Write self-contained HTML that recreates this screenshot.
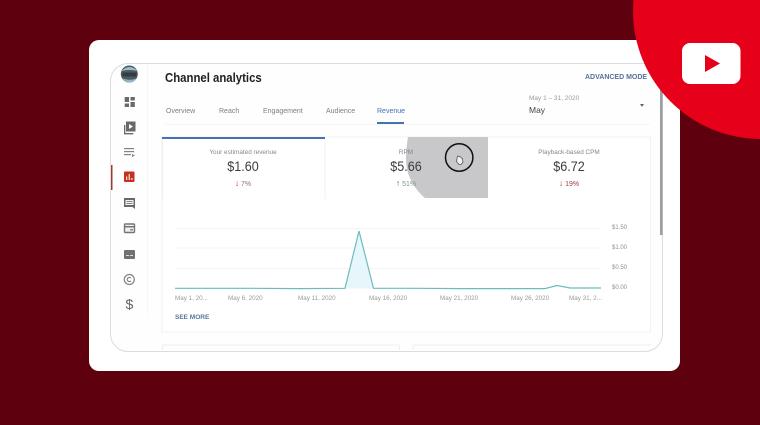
<!DOCTYPE html>
<html><head><meta charset="utf-8">
<style>
html,body{margin:0;padding:0}
body{width:760px;height:425px;overflow:hidden;background:#5e000e;position:relative;font-family:"Liberation Sans",sans-serif}
.a{position:absolute;white-space:nowrap}
.c{transform:translateX(-50%)}
.v{transform:translateX(-50%) scaleX(.9);font-size:14px;color:#3a3d40;top:158px}
.l{font-size:6.4px;color:#85878b;top:148.500px}
.d{font-size:7px;top:178px}
.d span{font-size:8.500px;font-weight:bold}
.t{top:108px;font-size:7px;color:#7b7f84}
.y{left:612px;font-size:6px;color:#909090}
.x{top:294.500px;font-size:6.300px;color:#999}
#m{position:absolute;left:0;top:0;width:760px;height:425px;filter:blur(.3px)}
</style></head><body>
<div class="a" style="left:89px;top:40px;width:591px;height:331px;background:#fff;border-radius:10px"></div>
<div id="m">
<div class="a" style="left:110px;top:63px;width:551px;height:287px;background:#fefefe;border:1px solid #d6dee3;border-radius:18px"></div>
<svg class="a" style="left:0;top:0" width="760" height="425" viewBox="0 0 760 425">
<rect x="147" y="64" width="1" height="250" fill="#f6f6f6"/>
<!-- avatar -->
<circle cx="129.300" cy="74" r="8.500" fill="#4c5a62"/>
<path d="M121.500 71q8-8 16 0q-8-2-16 0z" fill="#9dbbcd"/>
<path d="M122.500 78.500q7 2.500 14 0q-3 4-7 4t-7-4z" fill="#8db7c2"/>
<rect x="122.500" y="72.500" width="14" height="4" fill="#333c42"/>
<!-- dashboard -->
<g fill="#66696d"><rect x="124.700" y="97" width="4.300" height="5"/><rect x="130.500" y="97" width="4.300" height="3.500"/><rect x="124.700" y="103.500" width="4.300" height="3.500"/><rect x="130.500" y="102" width="4.300" height="5"/></g>
<!-- videos -->
<path d="M124 125h1.300v8h8v1.400h-9.300z" fill="#66696d"/><rect x="126" y="121.500" width="9.500" height="10" fill="#66696d"/><path d="M129 124l4 2.500-4 2.500z" fill="#fff"/>
<!-- playlist -->
<g fill="#808285"><rect x="124" y="148" width="10" height="1.200"/><rect x="124" y="151" width="10" height="1.200"/><rect x="124" y="154" width="7" height="1.200"/><path d="M132 154l3 1.500-3 1.500z"/></g>
<!-- active rail -->
<rect x="111" y="165" width="1.500" height="25" fill="#a5382b"/>
<rect x="124" y="171.500" width="10.500" height="10.500" rx="1" fill="#c5321f"/>
<g fill="#f5d9d3"><rect x="126" y="176.500" width="1.300" height="3.500"/><rect x="128.600" y="174" width="1.300" height="6"/><rect x="131.200" y="178" width="1.300" height="2"/></g>
<!-- comments -->
<path d="M124 198h11v11l-2.500-2h-8.500z" fill="#66696d"/><rect x="125.500" y="200" width="8" height="5" fill="#f2f2f2"/><rect x="126.500" y="201" width="6" height="1" fill="#888"/><rect x="126.500" y="203" width="6" height="1" fill="#888"/>
<!-- subtitles -->
<rect x="124.500" y="224" width="10" height="8.500" rx="1" fill="#f0f0f0" stroke="#727578" stroke-width="1.400"/><rect x="124" y="226" width="11" height="1.500" fill="#727578"/><rect x="130" y="229" width="3" height="1.500" fill="#888"/>
<!-- monetize -->
<rect x="124" y="250" width="11" height="9" rx="1" fill="#6e7175"/><rect x="126" y="255" width="3" height="1" fill="#ddd"/><rect x="130" y="255" width="3" height="1" fill="#ddd"/>
<!-- copyright -->
<circle cx="129.300" cy="279.500" r="5" fill="none" stroke="#808285" stroke-width="1.200"/>
<path d="M131 278.200a2.100 2.100 0 1 0 0 2.600" fill="none" stroke="#808285" stroke-width="1.100"/>
<!-- cards -->
<rect x="162" y="137" width="488.500" height="195" fill="#fff" stroke="#f2f2f2"/>
<path d="M162.500 350V346q0-1 1-1H398.500q1 0 1 1V350" fill="none" stroke="#efefef"/>
<path d="M413 350V346q0-1 1-1H651" fill="none" stroke="#efefef"/>
<rect x="165" y="124" width="485" height="1" fill="#f5f5f5"/>
<rect x="162" y="137" width="163" height="2" fill="#4672b4"/>
<rect x="324.500" y="139" width="1" height="60" fill="#f0f0f0"/>
<rect x="162" y="139" width="1" height="60" fill="#f0f0f0"/>
<rect x="377" y="122" width="27" height="2" fill="#4672b4"/>
<!-- gray overlay -->
<path d="M408 137H488V198H425Q413 188 408 173Q404 160 408 137Z" fill="#c8c8cb"/>
<circle cx="459.200" cy="157.500" r="13.700" fill="none" stroke="#111" stroke-width="1.500"/>
<path d="M457.500 156l3 1 2 2 .5 3-2 2.500h-2l-2.500-3z" fill="#f1f1f1" stroke="#555" stroke-width=".8"/>
<!-- scrollbar -->
<rect x="660" y="88" width="2.600" height="147" fill="#9c9fa2"/>
<!-- grid -->
<g fill="#f3f3f3"><rect x="175" y="228" width="426" height="1"/><rect x="175" y="247.500" width="426" height="1"/><rect x="175" y="268" width="426" height="1"/></g>
<!-- chart -->
<path d="M345 288.500L359 231L373 288.500Z" fill="#e6f6fa"/>
<path d="M175 288.300H250L300 288.600L345 288.300L359 231L373.500 288.300H420L460 288.600H545L557 285.500L570 288H601" fill="none" stroke="#6dbcb9" stroke-width="1.200"/>
</svg>
<div class="a" style="left:165px;top:71px;font-size:12.500px;font-weight:bold;color:#202124;transform:scaleX(.91);transform-origin:0 0">Channel analytics</div>
<div class="a" style="left:585px;top:74px;font-size:7px;font-weight:bold;color:#5a7199">ADVANCED MODE</div>
<div class="a t" style="left:166px">Overview</div>
<div class="a t" style="left:219px">Reach</div>
<div class="a t" style="left:263px">Engagement</div>
<div class="a t" style="left:326px">Audience</div>
<div class="a t" style="left:377px;color:#4672b4">Revenue</div>
<div class="a" style="left:529px;top:95px;font-size:6.500px;color:#9a9a9a">May 1 – 31, 2020</div>
<div class="a" style="left:529px;top:105px;font-size:8.500px;color:#444">May</div>
<div class="a" style="left:640px;top:104px;width:0;height:0;border-left:2.500px solid transparent;border-right:2.500px solid transparent;border-top:3px solid #666"></div>

<div class="a c l" style="left:243px">Your estimated revenue</div>
<div class="a v" style="left:243px">$1.60</div>
<div class="a c d" style="left:243px;color:#96716f"><span style="color:#b3312b">↓</span> 7%</div>

<div class="a c l" style="left:406px">RPM</div>
<div class="a v" style="left:406px">$5.66</div>
<div class="a c d" style="left:406px;color:#7a9a85"><span style="color:#2e6f48">↑</span> 51%</div>

<div class="a c l" style="left:569px">Playback-based CPM</div>
<div class="a v" style="left:569px">$6.72</div>
<div class="a c d" style="left:569px;color:#a0413d"><span style="color:#b3312b">↓</span> 19%</div>

<div class="a y" style="top:225px">$1.50</div>
<div class="a y" style="top:245px">$1.00</div>
<div class="a y" style="top:265px">$0.50</div>
<div class="a y" style="top:285px">$0.00</div>

<div class="a x" style="left:175px">May 1, 20...</div>
<div class="a x" style="left:228px">May 6, 2020</div>
<div class="a x" style="left:298px">May 11, 2020</div>
<div class="a x" style="left:369px">May 16, 2020</div>
<div class="a x" style="left:440px">May 21, 2020</div>
<div class="a x" style="left:511px">May 26, 2020</div>
<div class="a x" style="left:569px">May 31, 2...</div>

<div class="a" style="left:175px;top:314px;font-size:6.500px;font-weight:bold;color:#56749f">SEE MORE</div>
<div class="a" style="left:125.500px;top:295.500px;font-size:14px;color:#5f6368;line-height:16px">$</div>
</div>

<!-- YouTube circle -->
<svg class="a" style="left:0;top:0" width="760" height="425" viewBox="0 0 760 425">
<circle cx="761" cy="11" r="128" fill="#e60019"/>
<rect x="682" y="43" width="58.500" height="41" rx="8" fill="#fff"/>
<path d="M705 55L720 63.500L705 72Z" fill="#e60019"/>
</svg>
</body></html>
